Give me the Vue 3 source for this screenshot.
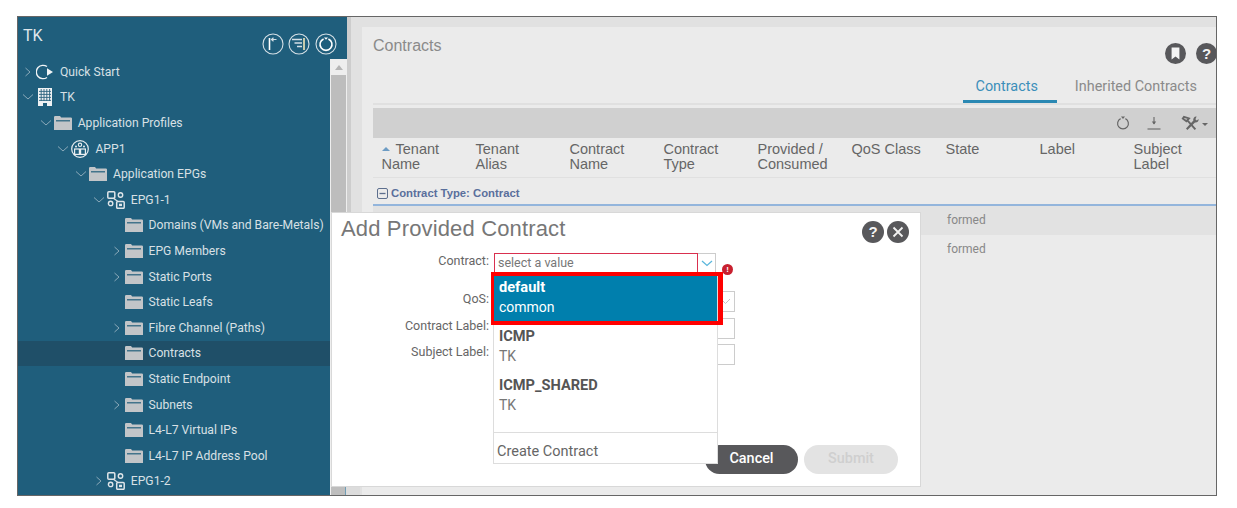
<script setup>
// Arbre de navigation : level = profondeur, icon = type d'icone, open = chevron
const tree = [
  { label: 'Quick Start', level: 0, icon: 'start', chevron: 'right' },
  { label: 'TK', level: 0, icon: 'tenant', chevron: 'down' },
  { label: 'Application Profiles', level: 1, icon: 'folder', chevron: 'down' },
  { label: 'APP1', level: 2, icon: 'app', chevron: 'down' },
  { label: 'Application EPGs', level: 3, icon: 'folder', chevron: 'down' },
  { label: 'EPG1-1', level: 4, icon: 'epg', chevron: 'down' },
  { label: 'Domains (VMs and Bare-Metals)', level: 5, icon: 'folder' },
  { label: 'EPG Members', level: 5, icon: 'folder', chevron: 'right' },
  { label: 'Static Ports', level: 5, icon: 'folder', chevron: 'right' },
  { label: 'Static Leafs', level: 5, icon: 'folder' },
  { label: 'Fibre Channel (Paths)', level: 5, icon: 'folder', chevron: 'right' },
  { label: 'Contracts', level: 5, icon: 'folder', selected: true },
  { label: 'Static Endpoint', level: 5, icon: 'folder' },
  { label: 'Subnets', level: 5, icon: 'folder', chevron: 'right' },
  { label: 'L4-L7 Virtual IPs', level: 5, icon: 'folder' },
  { label: 'L4-L7 IP Address Pool', level: 5, icon: 'folder' },
  { label: 'EPG1-2', level: 4, icon: 'epg', chevron: 'right' }
]

const columns = [
  'Tenant Name', 'Tenant Alias', 'Contract Name', 'Contract Type',
  'Provided / Consumed', 'QoS Class', 'State', 'Label', 'Subject Label'
]

const options = [
  { name: 'default', tenant: 'common', active: true },
  { name: 'ICMP', tenant: 'TK' },
  { name: 'ICMP_SHARED', tenant: 'TK' }
]
</script>

<template>
  <div class="frame">
    <aside class="sidebar">
      <div class="side-head">
        <span class="side-title">TK</span>
        <div class="side-tools">
          <svg width="22" height="22" viewBox="0 0 22 22" fill="none" stroke="#d5e0e6">
            <circle cx="11" cy="11" r="10" stroke-width="1.1" />
            <path d="M7.5 5v12" stroke="#fff" stroke-width="1.6" />
            <path d="M9.5 6.5h5M11.5 4.8l-2 1.7 2 1.7" stroke-width="1.2" />
          </svg>
          <svg width="22" height="22" viewBox="0 0 22 22" fill="none" stroke="#d5e0e6">
            <circle cx="11" cy="11" r="10" stroke-width="1.1" />
            <path d="M4 6.5h10M6.5 10h7.5M9 13.5h5" stroke-width="1.3" />
            <path d="M16 5v12" stroke="#f1e6b8" stroke-width="1.6" />
          </svg>
          <svg width="22" height="22" viewBox="0 0 22 22" fill="none" stroke="#d5e0e6">
            <circle cx="11" cy="11" r="10" stroke-width="1.1" />
            <path d="M8.6 5.9a6 6 0 1 0 4.8 0" stroke="#fff" stroke-width="1.6" />
            <path d="M9 4.4h4l-2 2.4z" fill="#fff" stroke="none" />
          </svg>
        </div>
      </div>
      <div class="side-body">
        <ul class="tree">
          <li
            v-for="node in tree"
            :key="node.label"
            class="node"
            :class="{ selected: node.selected }"
            :style="{ paddingLeft: 2 + node.level * 17.7 + 'px' }"
          >
            <span class="chevron">
              <svg v-if="node.chevron === 'right'" width="8" height="10" viewBox="0 0 8 10" fill="none" stroke="#8aa9b9">
                <path d="M1.5 1l4.5 4-4.5 4" />
              </svg>
              <svg v-else-if="node.chevron === 'down'" width="12" height="8" viewBox="0 0 12 8" fill="none" stroke="#8aa9b9">
                <path d="M1 1.5l5 4.5 5-4.5" />
              </svg>
            </span>
            <span class="node-icon">
              <svg v-if="node.icon === 'folder'" width="18" height="14" viewBox="0 0 18 14">
                <path d="M0 1.2Q0 0 1.2 0H6l1.2 1.4h9.6Q18 1.4 18 2.6V14H0z" fill="#c2c5c8" />
                <path d="M2 4.2h14v1.2H2z" fill="#235f7c" />
              </svg>
              <svg v-else-if="node.icon === 'start'" width="18" height="16" viewBox="0 0 18 16" fill="none">
                <path d="M11 2.6A6.7 6.7 0 1 0 11 13.4" stroke="#f2f5f7" stroke-width="1.3" />
                <path d="M11 4.2l6 3.8-6 3.8z" fill="#f2f5f7" />
              </svg>
              <svg v-else-if="node.icon === 'tenant'" width="16" height="18" viewBox="0 0 16 18">
                <path d="M1 0h14v18H10v-3H6v3H1z" fill="#eef1f3" />
                <path d="M4.2 1v12M7 1v12M9.8 1v12M12.6 1v12M2 3.4h12M2 6.4h12M2 9.4h12M2 12.4h12" stroke="#2a637e" stroke-width=".9" />
              </svg>
              <svg v-else-if="node.icon === 'app'" width="18" height="18" viewBox="0 0 18 18" fill="none" stroke="#e8edf0">
                <circle cx="9" cy="9" r="8.3" stroke-width="1.2" />
                <rect x="3.6" y="9" width="4.8" height="5.4" stroke-width="1.2" />
                <rect x="9.6" y="9" width="4.8" height="5.4" stroke-width="1.2" />
                <circle cx="9" cy="4.8" r="1.7" stroke-width="1.1" />
                <circle cx="5" cy="6.4" r="1" fill="#e8edf0" stroke="none" />
                <circle cx="13" cy="6.4" r="1" fill="#e8edf0" stroke="none" />
              </svg>
              <svg v-else width="18" height="18" viewBox="0 0 18 18" fill="none" stroke="#dfe5e9">
                <rect x=".8" y=".8" width="7" height="6.4" rx="1" stroke-width="1.5" />
                <circle cx="13.5" cy="4" r="2.2" stroke-width="1.4" />
                <circle cx="3.6" cy="12.4" r="2.2" stroke-width="1.4" />
                <rect x="9.7" y="10.5" width="7.5" height="6.8" rx="1" stroke-width="1.5" />
                <path d="M6 7l5 3.5" stroke-width="1.2" />
                <rect x="12" y="12.7" width="3" height="2.4" fill="#dfe5e9" stroke="none" />
              </svg>
            </span>
            <span class="node-label">{{ node.label }}</span>
          </li>
        </ul>
        <div class="vscroll">
          <span class="vscroll-up"></span>
          <span class="vscroll-thumb"></span>
        </div>
      </div>
    </aside>

    <div class="splitter"></div>

    <main class="panel">
      <div class="panel-top">
        <h2 class="panel-title">Contracts</h2>
        <div class="panel-icons">
          <svg class="round" width="21" height="21" viewBox="0 0 21 21">
            <circle cx="10.5" cy="10.5" r="10.5" fill="#58585b" />
            <path d="M6.6 4.6h7.8v11.8l-3.9-3-3.9 3z" fill="#f4f4f4" />
          </svg>
          <svg class="round" width="21" height="21" viewBox="0 0 21 21">
            <circle cx="10.5" cy="10.5" r="10.5" fill="#58585b" />
            <text x="10.5" y="15.5" text-anchor="middle" class="glyph">?</text>
          </svg>
        </div>
      </div>
      <nav class="tabs">
        <span class="tab active">Contracts</span>
        <span class="tab">Inherited Contracts</span>
      </nav>
      <div class="divider"></div>

      <div class="toolbar">
        <svg width="14" height="16" viewBox="0 0 14 16" fill="none" stroke="#666">
          <path d="M4.6 3.6a5.4 5.4 0 1 0 4.8 0" stroke-width="1.2" />
          <path d="M5 1.4h4L7 4z" fill="#666" stroke="none" />
        </svg>
        <svg width="14" height="16" viewBox="0 0 14 16" fill="none" stroke="#666">
          <path d="M7 2v7" stroke-width="1.1" />
          <path d="M4.8 6.6h4.4L7 9.6z" fill="#666" stroke="none" />
          <path d="M.5 14h13" stroke-width="1.1" />
        </svg>
        <span class="tool-menu">
          <svg width="19" height="16" viewBox="0 0 19 16" fill="none" stroke="#666">
            <path d="M3 1.8l5 1.6-2.6 2.8-3.6-2.6zM6.4 5.4l8 9" stroke-width="1.9" />
            <path d="M15.6 1.6a3 3 0 0 0-3.2 4L5 13.6l1.4 1.4 7.6-7.6a3 3 0 0 0 3.6-3.4l-1.8 1.4-1.4-1.2z" fill="#666" stroke="none" />
          </svg>
          <i class="caret"></i>
        </span>
      </div>

      <div class="thead">
        <div v-for="(col, i) in columns" :key="col" class="th">
          <i v-if="i === 0" class="sort"></i>{{ col }}
        </div>
      </div>
      <div class="group">
        <svg width="11" height="11" viewBox="0 0 11 11" fill="none" stroke="#5d6f8e">
          <rect x=".5" y=".5" width="10" height="10" rx="1.5" />
          <path d="M2.5 5.5h6" stroke-width="1.3" />
        </svg>
        Contract Type: Contract
      </div>
      <div class="row shaded">formed</div>
      <div class="row">formed</div>
    </main>

    <section class="modal">
      <header class="modal-head">
        <h3 class="modal-title">Add Provided Contract</h3>
        <div class="modal-icons">
          <svg width="22" height="22" viewBox="0 0 22 22">
            <circle cx="11" cy="11" r="11" fill="#58585b" />
            <text x="11" y="16" text-anchor="middle" class="glyph">?</text>
          </svg>
          <svg width="22" height="22" viewBox="0 0 22 22">
            <circle cx="11" cy="11" r="11" fill="#58585b" />
            <path d="M6.5 6.5l9 9M15.5 6.5l-9 9" stroke="#f2f2f2" stroke-width="1.8" />
          </svg>
        </div>
      </header>

      <form class="form">
        <label class="form-label">Contract:</label>
        <div class="combo">
          <span class="combo-input">select a value</span>
          <span class="combo-btn">
            <svg width="12" height="7" viewBox="0 0 12 7" fill="none" stroke="#5bb7dc" stroke-width="1.3">
              <path d="M1 1l5 4.5L11 1" />
            </svg>
          </span>
          <span class="error-dot">!</span>
        </div>
        <label class="form-label">QoS:</label>
        <div class="field">
          <svg width="11" height="7" viewBox="0 0 11 7" fill="none" stroke="#c4c4c4">
            <path d="M1 1l4.5 4.5L10 1" />
          </svg>
        </div>
        <label class="form-label">Contract Label:</label>
        <div class="field"></div>
        <label class="form-label">Subject Label:</label>
        <div class="field"></div>
      </form>

      <footer class="modal-foot">
        <button type="button" class="btn cancel">Cancel</button>
        <button type="button" class="btn submit">Submit</button>
      </footer>

      <div class="dropdown">
        <div
          v-for="opt in options"
          :key="opt.name"
          class="option"
          :class="{ active: opt.active }"
        >
          <strong>{{ opt.name }}</strong>
          <span>{{ opt.tenant }}</span>
        </div>
        <div class="create">Create Contract</div>
      </div>
      <div class="highlight"></div>
    </section>

    <div class="hscroll"></div>
  </div>
</template>

<style>
html,
body {
  background: #fff;
}
</style>

<style scoped>
.frame {
  position: relative;
  display: flex;
  box-sizing: border-box;
  width: 1200px;
  height: 480px;
  margin: 16px 0 0 17px;
  border: 1px solid #666;
  overflow: hidden;
  font-family: "Liberation Sans", Arial, sans-serif;
}

.sidebar {
  display: flex;
  flex-direction: column;
  flex: 0 0 329px;
  min-width: 0;
  background: #1f5e7c;
  color: #d8e0e5;
}

.side-head {
  display: flex;
  justify-content: space-between;
  flex: 0 0 42px;
  box-sizing: border-box;
  padding: 10px 10px 0 5px;
}

.side-title {
  font: 16px Roboto, sans-serif;
  line-height: 17px;
  color: #dfe6ea;
}

.side-tools {
  display: flex;
  gap: 4.6px;
  margin-top: 6px;
}

.side-body {
  display: flex;
  flex: 1;
  min-height: 0;
}

.tree {
  flex: 0 0 312px;
  margin: 0;
  padding: 0;
  list-style: none;
}

.node {
  display: flex;
  align-items: center;
  height: 25.6px;
  font: 12.15px Roboto, sans-serif;
  white-space: nowrap;
}

.node.selected {
  background: #1f4f68;
}

.chevron {
  display: flex;
  justify-content: center;
  align-items: center;
  flex: 0 0 16px;
}

.node-icon {
  display: flex;
  justify-content: center;
  align-items: center;
  flex: 0 0 18px;
  margin-right: 6px;
}

.vscroll {
  display: flex;
  flex-direction: column;
  flex: 1;
  background: #eee;
}

.vscroll-up {
  align-self: center;
  margin: 6px 0 5px;
  border: 4px solid transparent;
  border-top: 0;
  border-bottom: 5px solid #b5b5b5;
}

.vscroll-thumb {
  flex: 1;
  margin: 0 1px;
  background: #bdbdbd;
}

.splitter {
  flex: 0 0 15px;
  box-sizing: border-box;
  background: #e1e1e1;
  border-left: 4px solid #cdcdcd;
}

.panel {
  flex: 1;
  min-width: 0;
  padding: 10px 0 0 11px;
  background: linear-gradient(#e1e1e1 10px, #ebebeb 10px);
}

.panel-top {
  display: flex;
  justify-content: space-between;
  height: 38px;
}

.panel-title {
  margin: 10px 0 0;
  font-size: 16px;
  font-weight: normal;
  line-height: 18px;
  color: #8a8a8a;
}

.panel-icons {
  display: flex;
  gap: 10.5px;
  margin: 16px -1px 0 0;
}

.glyph {
  font: bold 15px "Liberation Sans", sans-serif;
  fill: #f4f4f4;
}

.tabs {
  display: flex;
  justify-content: flex-end;
  align-items: flex-end;
  gap: 18px;
  height: 38px;
  padding-right: 19px;
  font: 14.4px Roboto, sans-serif;
  color: #8a8a8a;
}

.tab {
  padding-bottom: 7px;
  line-height: 18px;
}

.tab.active {
  padding: 0 19px 4px 13px;
  border-bottom: 3px solid #2a88b3;
  color: #3b8fba;
}

.divider {
  height: 2px;
  margin-bottom: 3px;
  background: #e0e0e0;
}

.toolbar {
  display: flex;
  justify-content: flex-end;
  align-items: center;
  gap: 17px;
  height: 30px;
  padding-right: 8px;
  background: #d0d0d0;
}

.tool-menu {
  display: flex;
  align-items: center;
  gap: 2px;
  margin-left: 3px;
}

.caret {
  border: 3px solid transparent;
  border-top: 3px solid #666;
  border-bottom: 0;
  margin-top: 3px;
}

.thead {
  display: grid;
  grid-template-columns: repeat(9, 94px);
  box-sizing: border-box;
  height: 40px;
  padding: 4px 0 0 8.5px;
  border-bottom: 1px solid #e0e0e0;
}

.th {
  padding-right: 20px;
  font-size: 14.5px;
  line-height: 14.5px;
  color: #666;
}

.sort {
  display: inline-block;
  margin: 0 6px 3px 0;
  border: 4px solid transparent;
  border-top: 0;
  border-bottom: 4px solid #6d9cc4;
}

.group {
  display: flex;
  align-items: center;
  gap: 3px;
  box-sizing: border-box;
  height: 28px;
  padding: 4px 0 0 4px;
  border-bottom: 2px solid #93b5dc;
  font-size: 11.3px;
  font-weight: bold;
  color: #5a6f9c;
}

.row {
  height: 29px;
  padding-left: 574px;
  font: 12px/29px Roboto, sans-serif;
  color: #888;
}

.row.shaded {
  background: #e2e2e2;
}

.modal {
  position: absolute;
  left: 313px;
  top: 195px;
  display: flex;
  flex-direction: column;
  box-sizing: border-box;
  width: 590px;
  height: 275px;
  background: #fff;
  border: 1px solid #d8d8d8;
}

.modal-head {
  display: flex;
  justify-content: space-between;
  height: 35px;
  padding: 0 11px 0 9px;
}

.modal-title {
  margin: 2px 0 0;
  font: normal 22px/28px "Liberation Sans", sans-serif;
  letter-spacing: .15px;
  color: #777;
}

.modal-icons {
  display: flex;
  gap: 3px;
  margin-top: 8px;
}

.form {
  display: grid;
  grid-template-columns: 157px 241px;
  grid-template-rows: 38px 26.5px 26.5px 21px;
  column-gap: 5px;
  margin-top: 5px;
}

.form-label {
  font: 12.5px/16px Roboto, sans-serif;
  color: #666;
  text-align: right;
}

.combo {
  position: relative;
  display: flex;
  width: 222px;
  height: 20px;
}

.combo-input {
  flex: 1;
  box-sizing: border-box;
  padding-left: 3px;
  border: 1px solid #d9304f;
  font: 12.5px/18px Roboto, sans-serif;
  color: #777;
}

.combo-btn {
  display: flex;
  justify-content: center;
  align-items: center;
  flex: 0 0 17px;
  border: 1px solid #ccc;
  border-left: 0;
}

.error-dot {
  position: absolute;
  left: 228px;
  top: 11px;
  width: 11px;
  height: 11px;
  border-radius: 50%;
  background: #c8202f;
  font: bold 8px/11px "Liberation Sans", sans-serif;
  color: #fff;
  text-align: center;
}

.field {
  display: flex;
  justify-content: flex-end;
  align-items: center;
  box-sizing: border-box;
  height: 21px;
  padding-right: 3px;
  border: 1px solid #ccc;
}

.modal-foot {
  display: flex;
  justify-content: flex-end;
  gap: 6px;
  margin-top: auto;
  padding: 0 22px 12px 0;
}

.btn {
  height: 29px;
  width: 94px;
  padding: 0 0 2px;
  border: 0;
  border-radius: 15px;
  font: 500 14.4px Roboto, sans-serif;
}

.cancel {
  width: 93px;
  background: #58585b;
  color: #fff;
}

.submit {
  background: #e3e3e3;
  color: #cfcfcf;
}

.dropdown {
  position: absolute;
  left: 161px;
  top: 61px;
  display: flex;
  flex-direction: column;
  box-sizing: border-box;
  width: 225px;
  height: 190px;
  background: #fff;
  border: 1px solid #ddd;
  border-top: 0;
  font-family: Roboto, sans-serif;
}

.option {
  display: flex;
  flex-direction: column;
  box-sizing: border-box;
  height: 49px;
  padding: 3px 0 0 5px;
  font-size: 14px;
  line-height: 20px;
  color: #777;
}

.option strong {
  font-size: 14.6px;
  color: #555;
}

.option.active {
  background: #007fad;
  color: #fff;
}

.option.active strong {
  color: #fff;
}

.create {
  margin-top: auto;
  height: 31px;
  box-sizing: border-box;
  padding-left: 3px;
  border-top: 1px solid #ddd;
  font-size: 14.5px;
  line-height: 37px;
  color: #666;
}

.highlight {
  position: absolute;
  left: 159px;
  top: 59px;
  box-sizing: border-box;
  width: 232px;
  height: 53px;
  border: solid #f00;
  border-width: 4px 5px 4px 3px;
}

.hscroll {
  position: absolute;
  left: 314px;
  bottom: 0;
  width: 28px;
  height: 8px;
  background: linear-gradient(90deg, #bdbdbd 13px, #6f9db5 13px, #6f9db5 14px, #dcdcdc 14px);
}
</style>
